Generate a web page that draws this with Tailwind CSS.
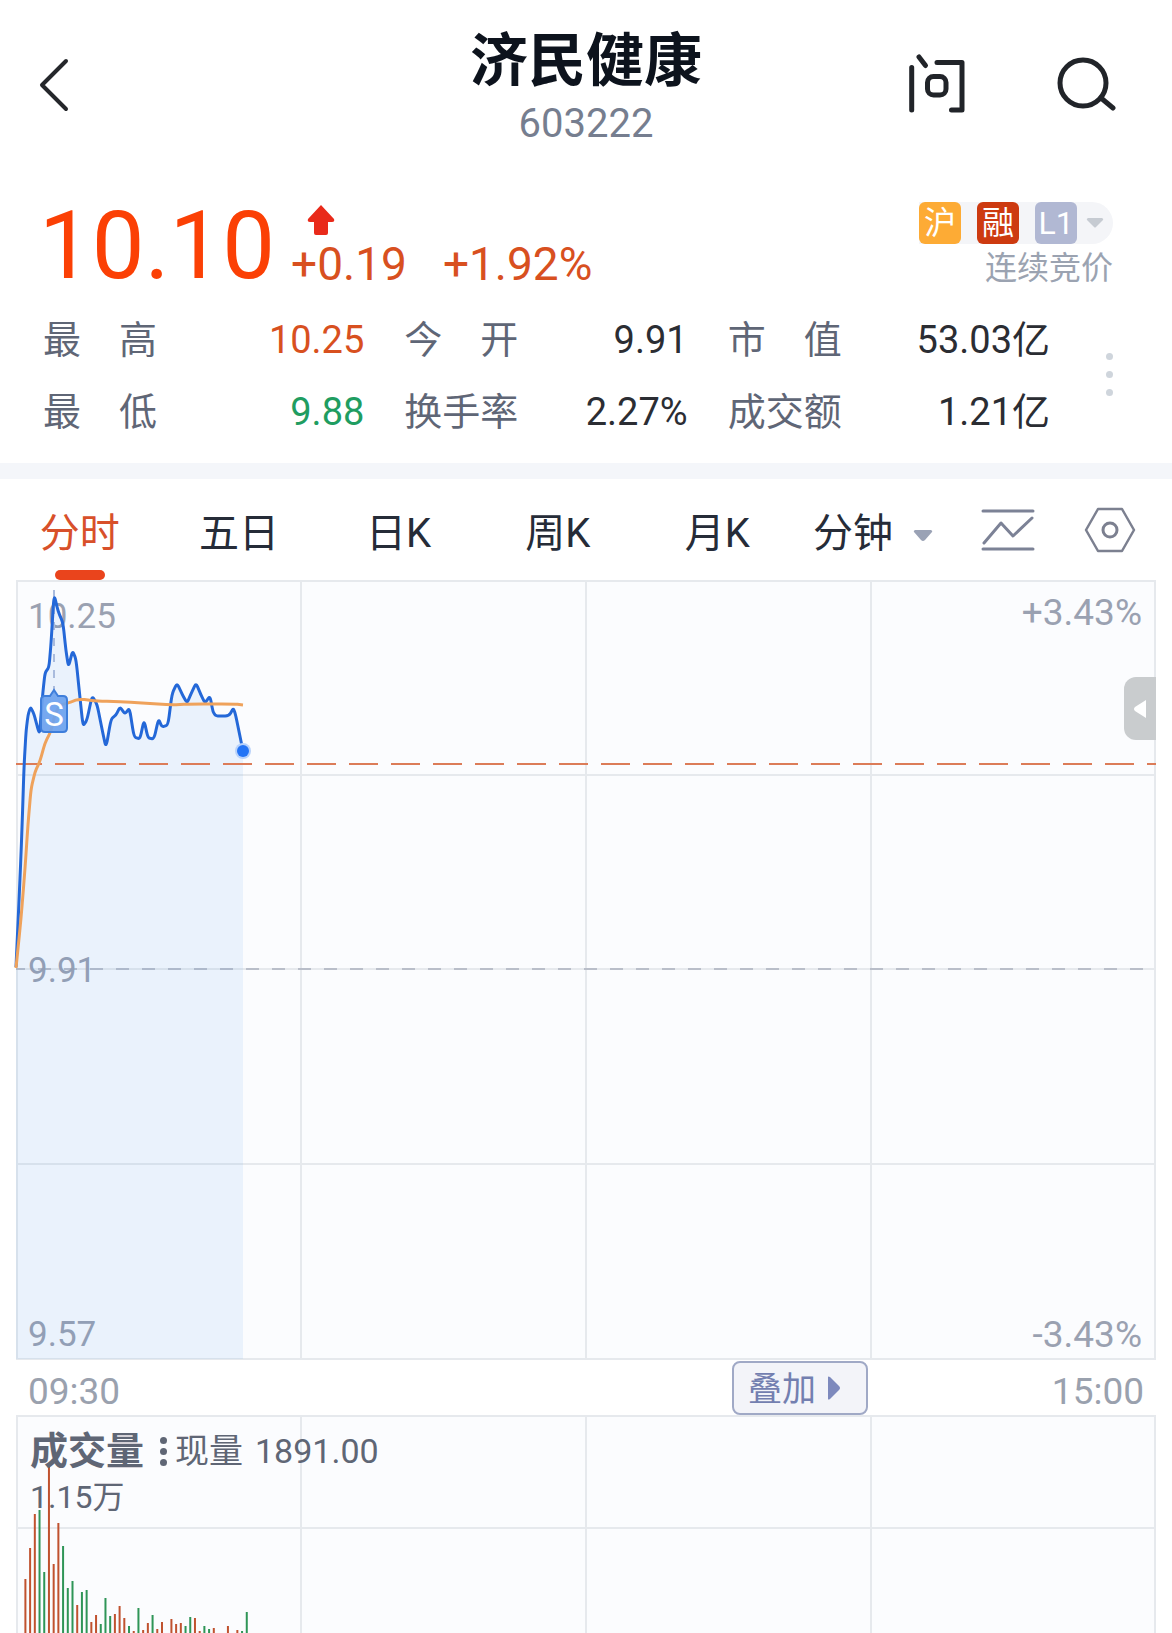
<!DOCTYPE html>
<html lang="zh-CN">
<head>
    <meta charset="UTF-8">
    <meta name="viewport" content="width=device-width, initial-scale=1.0">
    <title>济民健康 603222</title>
    <script src="https://cdn.jsdelivr.net/npm/@tailwindcss/browser@4"></script>
</head>
<body class="flex min-h-screen flex-col bg-white font-[Roboto,'Noto_Sans_CJK_SC',sans-serif] text-[#2b2d33]">

    <!-- Header -->
    <header class="grid grid-cols-[1fr_auto_1fr] items-center px-9 pt-6">
        <button aria-label="返回" class="w-9 pb-1">
            <svg class="h-14 w-9" viewBox="0 0 36 56" fill="none" stroke="#25272b" stroke-width="4" stroke-linecap="round" stroke-linejoin="round">
                <path d="M30 4 6 28l24 24" />
            </svg>
        </button>
        <div class="text-center">
            <h1 class="text-[58px] leading-[74px] font-bold text-[#0d131d]">济民健康</h1>
            <p class="text-[40px] leading-[52px] text-[#767e8f]">603222</p>
        </div>
        <div class="flex justify-end gap-[90px] pr-5 pb-2">
            <button aria-label="问一问">
                <svg class="size-[60px]" viewBox="0 0 60 60" fill="none" stroke="#212429" stroke-width="5" stroke-linecap="round" stroke-linejoin="round">
                    <path d="M5.7 14.5V57M13 4l6.500 8.500M31 9.500h25V57H45.500" />
                    <rect x="21.500" y="23.500" width="18.500" height="18.500" rx="6" />
                </svg>
            </button>
            <button aria-label="搜索">
                <svg class="size-[60px]" viewBox="0 0 60 60" fill="none" stroke="#212429" stroke-width="5" stroke-linecap="round">
                    <circle cx="27" cy="30" r="23" />
                    <path d="M45 45l12 10" />
                </svg>
            </button>
        </div>
    </header>

    <!-- Quote -->
    <section class="pt-[50px] pr-[59px] pl-[43px]">
        <div class="flex justify-between">
            <div class="flex items-end text-[#d8501f]">
                <span class="-ml-1 text-[94px] leading-[92px] text-[#fb4005]">10.10</span>
                <div class="ml-4 flex flex-col">
                    <svg class="ml-4 h-8 w-7" viewBox="0 0 28 32">
                        <path d="M14 1 27 15q1 3-2 3h-4v11q0 2-2 2H9q-2 0-2-2V18H3q-3 0-2-3z" fill="#e92a1a" />
                    </svg>
                    <p class="flex gap-9 text-[46px] leading-[56px]"><span>+0.19</span><span>+1.92%</span></p>
                </div>
            </div>
            <div class="flex flex-col items-end gap-1 pt-[2px]">
                <button class="flex items-center gap-4 rounded-r-full bg-[#f4f5f8] text-[32px] leading-[42px] text-white" aria-label="标签">
                    <span class="w-[42px] rounded-md bg-[#fdab35]">沪</span>
                    <span class="w-[42px] rounded-md bg-[#cd3a10]">融</span>
                    <span class="w-[42px] rounded-md bg-[#b1b8d3]">L1</span>
                    <svg class="-ml-2 mr-2 h-3 w-5" viewBox="0 0 20 12"><path d="M3 1h14q2 1 1 2l-7 7q-1 1-2 0L2 3q-1-1 1-2z" fill="#c6cbd2" /></svg>
                </button>
                <p class="text-[32px] leading-10 text-[#9ba3b1]">连续竞价</p>
            </div>
        </div>

        <div class="mt-3 flex items-center justify-between">
            <dl class="mr-[56px] grid flex-1 grid-cols-[321fr_283fr_322fr] gap-x-10 text-[38px] leading-[72px]">
                <div class="flex justify-between"><dt class="text-[#5f6676]">最　高</dt><dd class="text-[#d8501f]">10.25</dd></div>
                <div class="flex justify-between"><dt class="text-[#5f6676]">今　开</dt><dd>9.91</dd></div>
                <div class="flex justify-between"><dt class="text-[#5f6676]">市　值</dt><dd>53.03亿</dd></div>
                <div class="flex justify-between"><dt class="text-[#5f6676]">最　低</dt><dd class="text-[#1f9d61]">9.88</dd></div>
                <div class="flex justify-between"><dt class="text-[#5f6676]">换手率</dt><dd>2.27%</dd></div>
                <div class="flex justify-between"><dt class="text-[#5f6676]">成交额</dt><dd>1.21亿</dd></div>
            </dl>
            <button aria-label="更多" class="flex flex-col gap-[11px] pb-1">
                <span class="size-[7px] rounded-full bg-[#cfd5dc]"></span>
                <span class="size-[7px] rounded-full bg-[#cfd5dc]"></span>
                <span class="size-[7px] rounded-full bg-[#cfd5dc]"></span>
            </button>
        </div>
    </section>

    <div class="mt-[15px] h-4 bg-[#f4f6fa]"></div>

    <!-- Period tabs -->
    <nav class="flex h-[101px] text-[40px] text-[#262c38]">
        <div class="grid w-[68%] shrink-0 grid-cols-5">
            <button class="relative pt-2 text-[#d8502a]">分时
                <span class="absolute bottom-0 left-1/2 h-[10px] w-[50px] -translate-x-1/2 rounded-full bg-[#ea441c]"></span>
            </button>
            <button class="pt-2">五日</button>
            <button class="pt-2">日K</button>
            <button class="pt-2">周K</button>
            <button class="pt-2">月K</button>
        </div>
        <div class="flex flex-1 items-center justify-between pr-9 pl-4">
            <label class="relative pt-2">
                <select aria-label="分钟" class="w-[120px] appearance-none">
                    <option>分钟</option>
                </select>
                <svg class="pointer-events-none absolute top-1/2 right-0 h-3 w-5" viewBox="0 0 20 12"><path d="M2 0h16q2 1 1 2l-7 8q-2 2-4 0L1 2q-1-1 1-2z" fill="#9aa2b5" /></svg>
            </label>
            <button aria-label="指标">
                <svg class="h-11 w-[54px]" viewBox="0 0 54 44" fill="none" stroke="#7c8296" stroke-width="3" stroke-linecap="round" stroke-linejoin="round">
                    <path d="M2 3h50M2 41h50M3 35 20 15l12 13L51 10" />
                </svg>
            </button>
            <button aria-label="设置">
                <svg class="h-12 w-[52px]" viewBox="0 0 52 48" fill="none" stroke="#7c8090" stroke-width="2.500" stroke-linejoin="round">
                    <path d="M14 3h24l12 21-12 21H14L2 24z" />
                    <circle cx="26" cy="24" r="7" stroke-width="3" />
                </svg>
            </button>
        </div>
    </nav>

    <!-- Price chart -->
    <section class="relative mx-4 text-[35px] leading-[42px] text-[#9aa1b1]">
        <svg class="block h-[780px] w-full bg-[#fbfcfe]" viewBox="16 581 1140 780" preserveAspectRatio="none" fill="none" stroke="#e6e9ed" stroke-width="2">
            <path d="M17 582h1138v778H17zM301 581v779M586 581v779M871 581v779M16 776h1140M16 970h1140M16 1165h1140" />
            <path d="M16 970h1140" stroke="#b9bec9" stroke-dasharray="13 13" stroke-dashoffset="4" />
        </svg>
        <span class="absolute top-4 left-3">10.25</span>
        <span class="absolute top-[370px] left-3">9.91</span>
        <span class="absolute bottom-1 left-3">9.57</span>
        <span class="absolute top-3 right-[14px] text-[37px]">+3.43%</span>
        <span class="absolute right-[14px] bottom-1 text-[37px]">-3.43%</span>
        <svg class="absolute inset-0 h-full w-full overflow-visible" viewBox="16 581 1140 780" preserveAspectRatio="none" fill="none" stroke-width="3">
            <path id="area" fill="#3f8eee" fill-opacity="0.09" />
            <path d="M16 765h1140" stroke="#dc7c58" stroke-width="2" stroke-dasharray="29 13" stroke-dashoffset="3" />
            <path d="M54 591v104" stroke="#a9bbdd" stroke-width="2" stroke-dasharray="8 8" />
            <path id="price" stroke="#2468d8" stroke-linejoin="round" />
            <path id="average" stroke="#efa25b" stroke-linejoin="round" />
            <circle cx="243" cy="752" r="8" fill="#b9d2fa" />
            <circle cx="243" cy="752" r="6" fill="#2474f5" />
            <path d="M45 697h5l4-6 4 6h5q4 0 4 4v28q0 4-4 4H45q-4 0-4-4v-28q0-4 4-4z" fill="#6ba2ee" fill-opacity="0.92" stroke="#3e7edb" stroke-width="2" />
            <text x="54" y="727" text-anchor="middle" font-size="33" fill="#fff">S</text>
        </svg>
        <button aria-label="展开" class="absolute top-[97px] right-0 flex h-[63px] w-8 items-center justify-center rounded-l-xl bg-[#c9ccce]">
            <svg class="h-5 w-3" viewBox="0 0 12 20"><path d="M12 1v18L1 12q-2-2 0-4z" fill="#fff" /></svg>
        </button>
    </section>

    <!-- Time axis -->
    <div class="flex h-[55px] items-center px-7 text-[37px] text-[#9aa1ae]">
        <span class="flex-[704] pt-2">09:30</span>
        <button class="flex h-[54px] w-[136px] items-center justify-center gap-3 rounded-lg border-2 border-[#a0a9c6] bg-[#f3f4f9] pr-3 text-[34px] text-[#737fb0]"><span class="pt-1">叠加</span>
            <svg class="h-6 w-3" viewBox="0 0 12 24"><path d="M0 1q0-1 2 0l9 9q2 2 0 4l-9 9q-2 1-2 0z" fill="#7d89bd" /></svg>
        </button>
        <span class="flex-[276] pt-2 text-right">15:00</span>
    </div>

    <!-- Volume chart -->
    <section class="relative mx-4 min-h-[215px] flex-1 overflow-hidden border-2 border-b-0 border-[#e6e9ed] bg-[#fbfcfe] text-[#5f6675]">
        <svg class="absolute inset-x-0 top-0 h-[217px] w-full" viewBox="18 1418 1136 217" preserveAspectRatio="none">
            <path d="M301 1416v219M586 1416v219M871 1416v219M16 1529h1140" stroke="#e6e9ed" stroke-width="2" />
            <g id="volume"></g>
        </svg>
        <div class="relative px-3 pt-2">
            <div class="flex items-center leading-[52px]">
                <h2 class="text-[38px] font-bold">成交量</h2>
                <button aria-label="切换指标" class="mr-2 ml-4 flex flex-col gap-1">
                    <span class="size-[7px] rounded-full bg-[#5f6675]"></span>
                    <span class="size-[7px] rounded-full bg-[#5f6675]"></span>
                    <span class="size-[7px] rounded-full bg-[#5f6675]"></span>
                </button>
                <p class="flex gap-3 text-[34px]"><span>现量</span><span>1891.00</span></p>
            </div>
            <p class="text-[32px] leading-10">1.15万</p>
        </div>
    </section>

    <script>
        const price = [[16,968],[20,880],[22,830],[24,768],[26,733],[28,716],[30.5,708],[34,715],[39.5,736],[41,716],[43,692],[45,674],[49,668],[51,645],[54,595],[58,612],[63,624],[66,652],[68.5,668],[72.5,652],[76,660],[80,699],[83,727],[87,721],[92,697],[97,705],[102,730],[106,749],[111,720],[116,716],[120,708],[125,715],[129.5,709],[134,738],[140,740],[144,721],[148,739],[154,740],[158.5,720],[162,728],[168,726],[172,695],[177,684],[182,695],[187,704],[191,695],[196,684],[201,696],[205,704],[210,697],[213,713],[216,717],[229,717],[234,708],[243,752]];
        const average = [[16,969],[21,920],[25,870],[28,825],[31,790],[35,773],[40,762],[45,744],[51,732],[55,715],[60,706],[68,704],[79,700],[97,702],[130,703],[170,706],[190,705],[235,705],[243,706]];

        // rounds off each corner with a short quadratic curve
        function smooth(points) {
            let d = `M${points[0]}`;
            for (let i = 1; i < points.length - 1; i++) {
                const [x, y] = points[i];
                const [nx, ny] = points[i + 1];
                const [px, py] = points[i - 1];
                d += ` L${x + (px - x) * 0.3} ${y + (py - y) * 0.3} Q${x} ${y} ${x + (nx - x) * 0.3} ${y + (ny - y) * 0.3}`;
            }
            return d + ` L${points[points.length - 1]}`;
        }

        document.getElementById("price").setAttribute("d", smooth(price));
        document.getElementById("average").setAttribute("d", smooth(average));
        document.getElementById("area").setAttribute("d", smooth(price) + " V1360 H16 Z");

        // slot, height, up or down
        const volume = [
            [0,53,"r"],[1,84,"r"],[2,118,"r"],[3,122,"g"],[4,60,"g"],[5,167,"r"],[6,68,"r"],[7,109,"r"],[8,86,"g"],[9,44,"g"],
            [10,51,"g"],[11,27,"r"],[12,40,"g"],[13,42,"g"],[14,10,"r"],[15,17,"r"],[16,8,"g"],[17,34,"g"],[18,16,"g"],[19,18,"r"],
            [20,26,"r"],[21,14,"r"],[22,6,"g"],[23,1,"r"],[24,24,"g"],[25,2,"r"],[26,9,"r"],[27,17,"g"],[28,3,"r"],[29,10,"r"],
            [31,13,"r"],[32,8,"r"],[33,9,"r"],[34,6,"g"],[35,15,"g"],[36,14,"r"],[37,1,"r"],[38,6,"g"],[39,3,"g"],[40,4,"r"],
            [43,6,"r"],[45,2,"r"],[46,1,"g"],[47,20,"g"]
        ];
        document.getElementById("volume").innerHTML = volume.map(([slot, height, side]) =>
            `<rect x="${24.4 + slot * 4.71}" y="${1633 - height}" width="2" height="${height + 2}" fill="${side === "r" ? "#c0522f" : "#2f9557"}" />`
        ).join("");
    </script>
</body>
</html>
